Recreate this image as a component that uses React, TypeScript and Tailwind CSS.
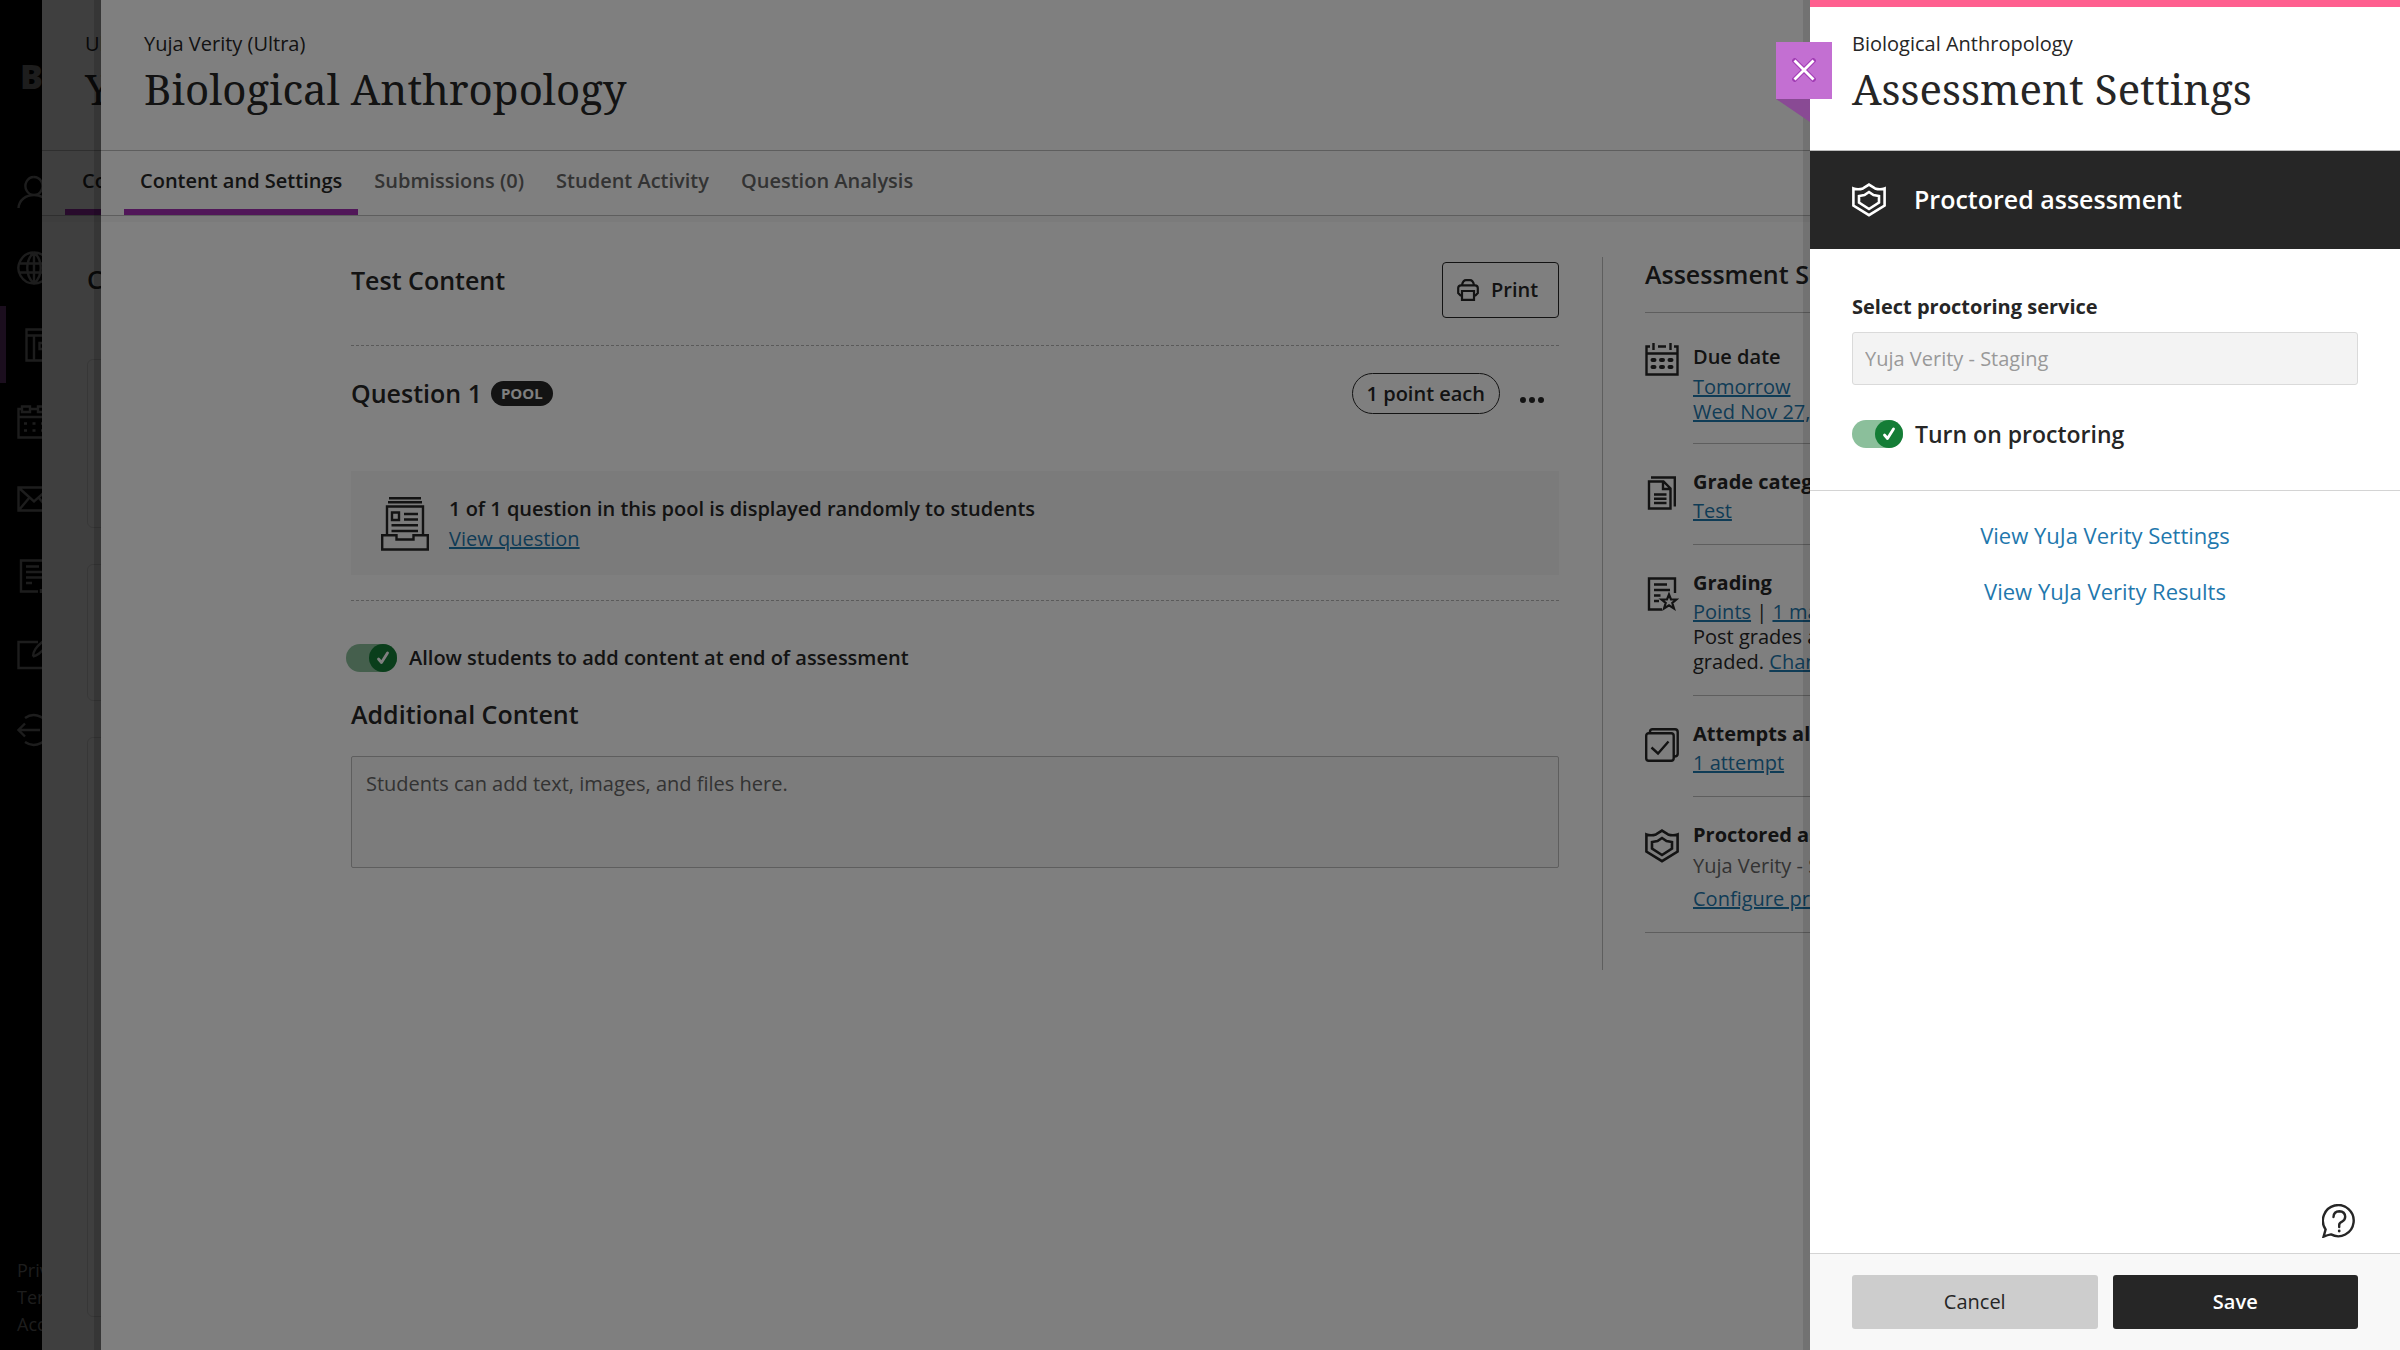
import { useState } from "react";

const SERIF =
	"font-['Noto_Serif','DejaVu_Serif_Condensed','DejaVu_Serif',serif]";
const LINK = "text-[#1f78ad] underline";

const ShieldIcon: React.FC = () => (
	<svg
		width="34"
		height="34"
		viewBox="0 0 34 34"
		fill="none"
		stroke="currentColor"
		strokeWidth="2.6"
	>
		<path d="M17 1.6 L23 5.4 Q28 7 32.6 5.4 V22.5 L17 32.2 L1.4 22.5 V5.4 Q6 7 11 5.4 Z" />
		<path d="M17 9 L21.5 12 L27 13 V19.5 L17 26 L7 19.5 V13 L12.5 12 Z" />
	</svg>
);

const CalendarIcon: React.FC = () => (
	<svg
		width="34"
		height="34"
		viewBox="0 0 34 34"
		fill="none"
		stroke="currentColor"
		strokeWidth="2.4"
	>
		<path d="M5 4.5 H1.5 V32.5 H32.5 V4.5 H29 M13 4.5 H21 M8.5 1 V8 M25.5 1 V8 M1.5 11.5 H32.5" />
		<path
			d="M7.5 18 h2 M16 18 h2 M24.5 18 h2 M7.5 25 h2 M16 25 h2 M24.5 25 h2"
			strokeWidth="4"
			strokeLinecap="round"
		/>
	</svg>
);

const PagesIcon: React.FC = () => (
	<svg
		width="34"
		height="34"
		viewBox="0 0 34 34"
		fill="none"
		stroke="currentColor"
		strokeWidth="2.4"
	>
		<path d="M4 5.5 H18.5 L25.5 12.5 V32.5 H4 Z M18 5.5 V13 H25.5" />
		<path d="M6 1.5 H29.8 V30.5 M9 18.5 H21.5 M9 22.8 H21.5 M9 27 H21.5" />
	</svg>
);

const GradingIcon: React.FC = () => (
	<svg
		width="34"
		height="34"
		viewBox="0 0 34 34"
		fill="none"
		stroke="currentColor"
		strokeWidth="2.4"
	>
		<path d="M17 32.5 H4 V1.5 H30 V16 M9 7.5 H22 M9 13 H25 M9 18.5 H15.5 M9 24 H14" />
		<path
			d="M24 17.5 L26 22.5 H31.5 L27.3 26 L29 31.5 L24 28.3 L19 31.5 L20.7 26 L16.5 22.5 H22 Z"
			strokeWidth="2.2"
		/>
	</svg>
);

const AttemptsIcon: React.FC = () => (
	<svg
		width="34"
		height="34"
		viewBox="0 0 34 34"
		fill="none"
		stroke="currentColor"
		strokeWidth="2.4"
	>
		<rect x="1.2" y="5.2" width="27.5" height="27.5" rx="2.5" />
		<path d="M5 5 V3.5 Q5 1.3 7.5 1.3 H30 Q32.7 1.3 32.7 4 V26 Q32.7 28.5 29 28.5" />
		<path d="M6.5 19.5 L13 25.5 L23.5 13.5" />
	</svg>
);

const PoolIcon: React.FC = () => (
	<svg
		width="48"
		height="54"
		viewBox="0 0 48 54"
		fill="none"
		stroke="currentColor"
		strokeWidth="2.4"
	>
		<path d="M8 1.3 H40 M7 5.3 H41 M6 38 V9.5 H42 V38" />
		<path d="M11 15.5 H18 V23 H11 Z M23 17 H37 M23 22.5 H37 M10.5 28.3 H37 M10.5 34 H37" />
		<path d="M1.2 38.2 H15.5 V42.5 H32.5 V38.2 H46.8 V52.5 H1.2 Z" />
	</svg>
);

const PrinterIcon: React.FC = () => (
	<svg
		width="22"
		height="22"
		viewBox="0 0 22 22"
		fill="none"
		stroke="currentColor"
		strokeWidth="2.2"
	>
		<path d="M5 16.5 H3.5 L1.2 14 V9 Q1.2 6.3 4 6.3 H18 Q20.8 6.3 20.8 9 V14 L18.5 16.5 H17" />
		<path d="M5 6 Q6 1.2 9 1.2 H13 Q16 1.2 17 6 M5 12 H17 V20.8 H5 Z" />
	</svg>
);

const HelpIcon: React.FC = () => (
	<svg
		width="34"
		height="34"
		viewBox="0 0 34 34"
		fill="none"
		stroke="currentColor"
		strokeWidth="2.4"
	>
		<path d="M1.6 32.6 L3.6 25.5 A15.4 15.6 0 1 1 9 30.4 Q5.5 31 1.6 32.6 Z" />
		<path
			d="M11.5 13 Q11.8 7.3 17.3 7.3 Q23 7.5 23.2 12.8 Q23.2 16 20 17.7 Q17.2 19 17.2 21 V23"
			strokeLinecap="round"
		/>
		<circle cx="17.2" cy="27" r="1.4" fill="currentColor" stroke="none" />
	</svg>
);

// user, institution, courses, calendar, messages, grades, tools, sign out
const navPaths = [
	"M17 3 a8.5 9 0 1 1 -0.1 0 M1.5 34 C2 26 9 21 17 21 S32 26 32.5 34",
	"M17 1.5 a15.5 15.5 0 1 1 -0.1 0 M17 1.5 V32.5 M3 12.5 H31 M3 21.5 H31 M17 1.5 C8 9 8 25 17 32.5 C26 25 26 9 17 1.5",
	"M1.5 1.5 H32 V32.5 H1.5 Z M1.5 7.5 H32 M9 7.5 V32.5 M14.5 15 H26 V21 H14.5 Z",
	"M5 4 H1.5 V32.5 H32.5 V4 M5 1.5 H13 V7 H5 Z M21 1.5 H29 V7 H21 Z M13 4 H21 M1.5 12 H32.5 M7 18.5 h3 M15.5 18.5 h3 M24 18.5 h3 M7 25.5 h3 M15.5 25.5 h3 M24 25.5 h3",
	"M1.5 5.5 H32.5 V28.5 H1.5 Z M1.5 5.5 L17 19.5 L32.5 5.5 M2 28 L12.5 15.5 M32 28 L21.5 15.5",
	"M21 32.5 H4 V1.5 H30 V16 M9 7.5 H22 M9 13 H27 M9 18.5 H25 M9 24 H15 M24 30 V34",
	"M21 6 H1.5 V32 H30 V20 M16 20.5 C16 15 19 11 27 4.5 M16 20.5 C21 19.5 23 17 32 8",
	"M23 17 H2 M8 10.5 L1.5 17 L8 23.5 M8 5 C18 -2 32 5 32.5 17 C32 29 18 36 8 29",
];

const Switch: React.FC<{
	id: string;
	label: string;
	labelClass: string;
}> = ({ id, label, labelClass }) => {
	const [on, setOn] = useState(true);
	return (
		<div className="flex items-center gap-3">
			<span className="relative flex h-7 w-[51px]">
				<input
					id={id}
					type="checkbox"
					checked={on}
					onChange={() => setOn(!on)}
					className="h-7 w-full appearance-none rounded-full bg-gray-300 checked:bg-[#8bbf9b]"
				/>
				<span
					className={`pointer-events-none absolute top-0 flex size-7 items-center justify-center rounded-full ${
						on ? "right-0 bg-[#147d36]" : "left-0 bg-gray-500"
					}`}
				>
					<svg
						width="14"
						height="14"
						viewBox="0 0 14 14"
						fill="none"
						stroke="white"
						strokeWidth="2.8"
						strokeLinecap="round"
						strokeLinejoin="round"
					>
						<path d="M2.5 8 L5.5 11.5 L11.5 2" />
					</svg>
				</span>
			</span>
			<label htmlFor={id} className={labelClass}>
				{label}
			</label>
		</div>
	);
};

const SettingRow: React.FC<{
	icon: React.ReactNode;
	title: string;
	light?: boolean;
	last?: boolean;
	children: React.ReactNode;
}> = ({ icon, title, light, last, children }) => (
	<li
		className={`flex gap-[14px] ${last ? "border-b border-[#bcbcbc]" : ""}`}
	>
		<div className={`w-[34px] shrink-0 ${light ? "pt-[29px]" : "pt-8"}`}>
			{icon}
		</div>
		<div
			className={`min-w-0 flex-1 leading-[25px] ${
				last ? "pb-6" : "border-b border-[#bcbcbc]"
			} ${light ? "pt-[30px] pb-[19px]" : "pt-6 pb-[21px]"}`}
		>
			<h3
				className={`leading-7 ${
					light ? "mb-[3px] font-semibold" : "mb-[2px] font-bold"
				}`}
			>
				{title}
			</h3>
			{children}
		</div>
	</li>
);

const tabs = [
	"Content and Settings",
	"Submissions (0)",
	"Student Activity",
	"Question Analysis",
];

const NavStrip: React.FC = () => (
	<nav className="flex w-[42px] shrink-0 flex-col overflow-hidden bg-black text-[#757575]">
		<div className="flex h-[152px] items-center pl-[20px] text-[34px] font-extrabold">
			Bb
		</div>
		{navPaths.map((d, i) => (
			<a
				key={i}
				href="#"
				className={`flex h-[77px] items-center ${
					i === 2
						? "border-l-[6px] border-[#6f3a7a] pl-[19px]"
						: "pl-[17px]"
				}`}
			>
				<svg
					width="34"
					height="34"
					viewBox="0 0 34 34"
					fill="none"
					stroke="currentColor"
					strokeWidth="2.4"
					className="shrink-0"
				>
					<path d={d} />
				</svg>
			</a>
		))}
		<div className="mt-auto flex flex-col pb-3 pl-[17px] text-lg leading-[27px]">
			<a href="#">Privacy</a>
			<a href="#">Terms</a>
			<a href="#">Accessibility</a>
		</div>
	</nav>
);

const CoursePanel: React.FC = () => (
	<div className="flex w-[59px] shrink-0 flex-col overflow-hidden bg-white whitespace-nowrap">
		<div className="h-[151px] shrink-0 border-b border-[#bcbcbc] pt-[30px] pl-[43px]">
			<p className="leading-7">Ultra</p>
			<p className={`mt-[3px] text-[42px] leading-[56px] ${SERIF}`}>Yuja</p>
		</div>
		<div className="flex h-[65px] shrink-0 border-b border-[#bcbcbc] pl-[23px] shadow-[0_6px_0_rgba(0,0,0,0.03)]">
			<span className="flex items-center border-b-[6px] border-[#a32fb3] px-[17px] pt-px font-semibold">
				Content
			</span>
		</div>
		<p className="mt-[45px] pl-[45px] text-[25px] leading-9 font-semibold">
			Course
		</p>
		<div className="mt-[62px] ml-[45px] h-[169px] w-20 shrink-0 rounded-md border border-[#dedede]" />
		<div className="mt-9 ml-[45px] h-[137px] w-20 shrink-0 rounded-md border border-[#dedede]" />
		<div className="mt-9 mb-[33px] ml-[45px] w-20 flex-1 rounded-md border border-[#dedede]" />
	</div>
);

const TestContent: React.FC = () => (
	<section className="w-[1208px] shrink-0">
		<div className="flex items-start justify-between border-b border-dashed border-[#b5b5b5] pt-[5px] pb-[27px]">
			<h2 className="text-[25px] leading-9 font-semibold">Test Content</h2>
			<button className="flex h-14 w-[117px] items-center gap-3 rounded-[4px] border border-[#262626] pl-[14px] font-semibold">
				<PrinterIcon />
				Print
			</button>
		</div>
		<div className="mt-[27px] flex h-[41px] items-center">
			<h3 className="text-[25px] font-semibold">Question 1</h3>
			<span className="ml-[9px] rounded-full bg-[#262626] px-[10px] text-[15px] leading-[25px] font-bold text-white">
				POOL
			</span>
			<button className="ml-auto h-[41px] rounded-full border border-[#262626] px-[14px] font-semibold">
				1 point each
			</button>
			<button
				aria-label="More options"
				className="mr-[15px] ml-5 flex gap-[3px] pt-3"
			>
				<span className="size-[6px] rounded-full bg-[#262626]" />
				<span className="size-[6px] rounded-full bg-[#262626]" />
				<span className="size-[6px] rounded-full bg-[#262626]" />
			</button>
		</div>
		<div className="mt-[57px] flex h-[104px] items-center gap-5 bg-[#f7f7f7] pt-[2px] pl-[30px]">
			<PoolIcon />
			<div className="leading-[30px]">
				<p className="font-semibold">
					1 of 1 question in this pool is displayed randomly to students
				</p>
				<a href="#" className={LINK}>
					View question
				</a>
			</div>
		</div>
		<div className="mt-[25px] border-t border-dashed border-[#b5b5b5] pt-[42px]">
			<div className="ml-[-5px]">
				<Switch
					id="allow-content"
					label="Allow students to add content at end of assessment"
					labelClass="font-semibold"
				/>
			</div>
		</div>
		<h3 className="mt-[23px] text-[25px] leading-9 font-semibold">
			<label htmlFor="additional">Additional Content</label>
		</h3>
		<textarea
			id="additional"
			placeholder="Students can add text, images, and files here."
			className="mt-6 block h-28 w-full resize-none rounded-[2px] border border-[#bcbcbc] bg-[#f8f8f8] px-[14px] py-[13px] leading-7 placeholder:text-[#666]"
		/>
	</section>
);

const SettingsSummary: React.FC = () => (
	<aside className="ml-[43px] flex-1 border-l border-[#bcbcbc] pb-[37px] pl-[42px]">
		<h2 className="border-b border-[#bcbcbc] pb-[21px] text-[25px] leading-[34px] font-semibold">
			Assessment Settings
		</h2>
		<ul>
			<SettingRow icon={<CalendarIcon />} title="Due date" light>
				<a href="#" className={LINK}>
					Tomorrow
					<br />
					Wed Nov 27, 2024
				</a>
			</SettingRow>
			<SettingRow icon={<PagesIcon />} title="Grade category">
				<a href="#" className={LINK}>
					Test
				</a>
			</SettingRow>
			<SettingRow icon={<GradingIcon />} title="Grading">
				<p>
					<a href="#" className={LINK}>
						Points
					</a>{" "}
					|{" "}
					<a href="#" className={LINK}>
						1 maximum point
					</a>
				</p>
				<p>
					Post grades automatically
					<br />
					graded.{" "}
					<a href="#" className={LINK}>
						Change
					</a>
				</p>
			</SettingRow>
			<SettingRow icon={<AttemptsIcon />} title="Attempts allowed">
				<a href="#" className={LINK}>
					1 attempt
				</a>
			</SettingRow>
			<SettingRow icon={<ShieldIcon />} title="Proctored assessment" last>
				<p className="mt-1 mb-2 text-[#666]">Yuja Verity - Staging</p>
				<a href="#" className={LINK}>
					Configure proctoring
				</a>
			</SettingRow>
		</ul>
	</aside>
);

const SettingsDrawer: React.FC = () => (
	<aside className="absolute inset-y-0 right-0 flex w-[590px] flex-col bg-white shadow-[-7px_0_0_rgba(0,0,0,0.1)]">
		<div className="absolute top-[42px] left-[-34px]">
			<button
				aria-label="Close"
				className="flex h-[57px] w-14 items-center justify-center bg-[#c36fd2] pb-[2px]"
			>
				<svg width="24" height="24" viewBox="0 0 24 24" fill="none">
					<path
						d="M1 1 L23 23 M23 1 L1 23"
						stroke="#a23db5"
						strokeWidth="5"
					/>
					<path
						d="M2.5 2.5 L21.5 21.5 M21.5 2.5 L2.5 21.5"
						stroke="white"
						strokeWidth="2.8"
					/>
				</svg>
			</button>
			<svg width="34" height="23" viewBox="0 0 34 23">
				<path d="M0 0 H34 V23 Z" fill="#894a94" />
			</svg>
		</div>
		<header className="h-[151px] border-t-[7px] border-b border-t-[#ff5f8f] border-b-[#bcbcbc] px-[42px] pt-[23px]">
			<p className="leading-7">Biological Anthropology</p>
			<h1 className={`mt-[3px] text-[42px] leading-[56px] ${SERIF}`}>
				Assessment Settings
			</h1>
		</header>
		<div className="flex h-[98px] items-center gap-7 bg-[#262626] px-[42px] text-white">
			<ShieldIcon />
			<h2 className="text-[25px] font-semibold">Proctored assessment</h2>
		</div>
		<div className="border-b border-[#d4d4d4] px-[42px] pt-[44px] pb-[42px]">
			<label htmlFor="service" className="block leading-7 font-bold">
				Select proctoring service
			</label>
			<select
				id="service"
				disabled
				className="mt-[11px] block h-[53px] w-full appearance-none rounded-[3px] border border-[#dadada] bg-[#f3f3f3] px-3 text-[#999] opacity-100"
			>
				<option>Yuja Verity - Staging</option>
			</select>
			<div className="mt-[35px]">
				<Switch
					id="proctoring"
					label="Turn on proctoring"
					labelClass="text-[23px] leading-7 font-semibold"
				/>
			</div>
		</div>
		<div className="flex flex-col items-center gap-7 pt-[30px] text-[22px] leading-7 text-[#1f78ad]">
			<a href="#">View YuJa Verity Settings</a>
			<a href="#">View YuJa Verity Results</a>
		</div>
		<button
			aria-label="Help"
			className="mt-auto mr-[44px] mb-[15px] ml-auto"
		>
			<HelpIcon />
		</button>
		<footer className="flex gap-[15px] border-t border-[#d4d4d4] bg-[#f8f8f8] px-[42px] pt-[21px] pb-[21px]">
			<button className="h-[54px] flex-1 rounded-[3px] bg-[#cdcdcd]">
				Cancel
			</button>
			<button className="h-[54px] flex-1 rounded-[3px] bg-[#262626] font-semibold text-white">
				Save
			</button>
		</footer>
	</aside>
);

const App: React.FC = () => {
	return (
		<div className="relative flex min-h-screen overflow-hidden bg-white font-['Open_Sans','Noto_Sans',sans-serif] text-[20px] text-[#262626]">
			<div className="relative flex">
				<NavStrip />
				<CoursePanel />
				<div className="absolute inset-0 bg-black/50" />
			</div>
			<main className="relative min-w-0 flex-1 bg-white shadow-[-7px_0_0_rgba(0,0,0,0.14)]">
				<header className="h-[151px] border-b border-[#bcbcbc] px-[43px] pt-[30px]">
					<p className="leading-7">Yuja Verity (Ultra)</p>
					<h1 className={`mt-[3px] text-[42px] leading-[56px] ${SERIF}`}>
						Biological Anthropology
					</h1>
				</header>
				<div className="flex h-[65px] border-b border-[#bcbcbc] pl-[23px] shadow-[0_6px_0_rgba(0,0,0,0.03)]">
					{tabs.map((tab, i) => (
						<button
							key={tab}
							className={`border-b-[6px] px-4 pt-px font-semibold ${
								i === 0 ? "border-[#a32fb3]" : "border-transparent text-[#666]"
							}`}
						>
							{tab}
						</button>
					))}
				</div>
				<div className="mx-auto mt-[41px] flex max-w-[1799px]">
					<TestContent />
					<SettingsSummary />
				</div>
			</main>
			<div className="absolute inset-0 bg-black/50" />
			<SettingsDrawer />
		</div>
	);
};

export default App;
